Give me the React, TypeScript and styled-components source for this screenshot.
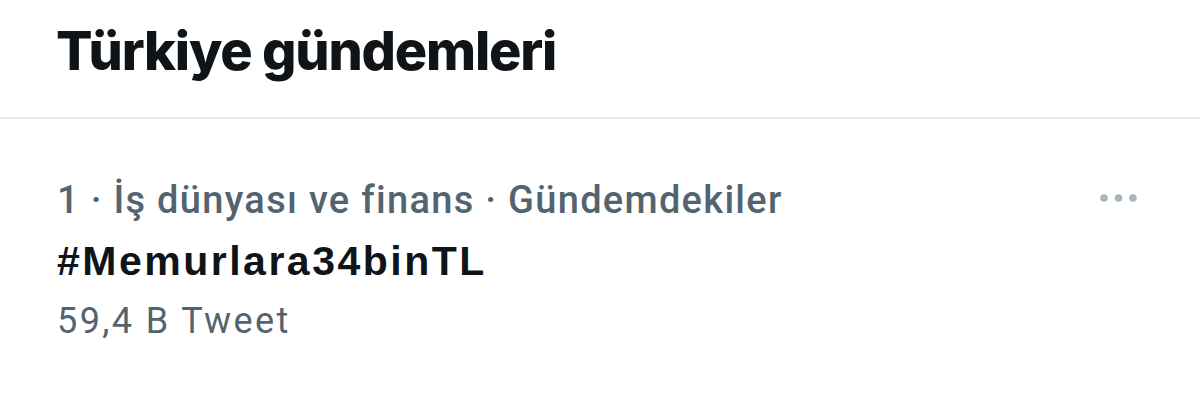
import React from 'react'
import styled, { createGlobalStyle } from 'styled-components'

const GlobalStyle = createGlobalStyle`
	html, body {
		margin: 0;
		padding: 0;
		background: #ffffff;
	}
	body {
		font-family: Roboto, "Liberation Sans", Arial, sans-serif;
	}
`

export default function App(): JSX.Element {
	return (
		<>
			<GlobalStyle />
			<Page>
				<Header>
					<Title>Türkiye gündemleri</Title>
				</Header>
				<Trend>
					<TrendBody>
						<Meta>1 · İş dünyası ve finans · Gündemdekiler</Meta>
						<Name>#Memurlara34binTL</Name>
						<Count>59,4 B Tweet</Count>
					</TrendBody>
					<MoreButton aria-label="Daha fazla">
						<svg width="37" height="8" viewBox="0 0 37 8">
							<circle cx="4" cy="4" r="3.8" fill="#aab4bd" />
							<circle cx="18.5" cy="4" r="3.8" fill="#aab4bd" />
							<circle cx="33" cy="4" r="3.8" fill="#aab4bd" />
						</svg>
					</MoreButton>
				</Trend>
			</Page>
		</>
	)
}

const Page = styled.div`
	width: 1200px;
	height: 413px;
	background: #ffffff;
	overflow: hidden;
`

const Header = styled.div`
	height: 119px;
	border-bottom: 2px solid #e6e9eb;
	padding: 0 56px;
	box-sizing: border-box;
	display: flex;
	align-items: flex-start;
`

const Title = styled.h1`
	margin: 19px 0 0 0;
	font-family: Inter, "Open Sans", sans-serif;
	font-weight: 800;
	font-size: 54px;
	letter-spacing: -1.2px;
	color: #0f1419;
	line-height: 64px;
`

const Trend = styled.div`
	display: flex;
	justify-content: space-between;
	align-items: flex-start;
	padding: 58px 63px 0 57px;
`

const TrendBody = styled.div`
	display: flex;
	flex-direction: column;
`

const Meta = styled.div`
	font-size: 38px;
	font-weight: 500;
	letter-spacing: 1.3px;
	color: #536471;
	line-height: 46px;
	white-space: nowrap;
`

const Name = styled.div`
	margin-top: 15px;
	font-family: "Liberation Sans", Arial, sans-serif;
	font-size: 41px;
	font-weight: 700;
	letter-spacing: 2.5px;
	color: #0f1419;
	line-height: 46px;
`

const Count = styled.div`
	margin-top: 14px;
	font-size: 36px;
	font-weight: 400;
	letter-spacing: 2.4px;
	color: #536471;
	line-height: 46px;
`

const MoreButton = styled.button`
	border: none;
	background: none;
	padding: 0;
	margin-top: 17px;
	display: flex;
	cursor: pointer;
`
